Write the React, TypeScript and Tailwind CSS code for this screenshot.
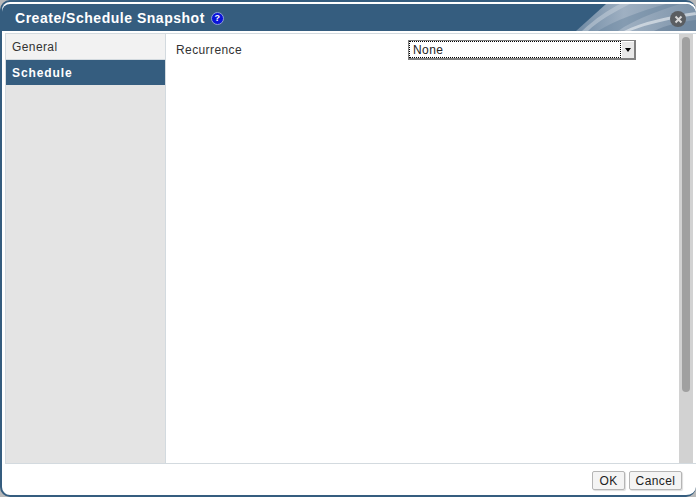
import React from "react";

// Swoosh artwork in the title bar
const HeaderSwoosh = () => (
  <svg className="absolute right-0 top-0 h-full w-[120px]" viewBox="0 0 120 27" preserveAspectRatio="none">
    <defs>
      <linearGradient id="sw" x1="0" y1="0" x2="1" y2="0">
        <stop offset="0" stopColor="#6f8aa4" />
        <stop offset="0.4" stopColor="#9fb0c2" />
        <stop offset="1" stopColor="#7d93a9" />
      </linearGradient>
    </defs>
    <path d="M0 27 L30 0 L120 0 L120 27 Z" fill="url(#sw)" />
    <path d="M6 27 C20 14 32 6 44 0 L54 0 C38 8 22 17 12 27 Z" fill="#c3ced9" opacity="0.55" />
    <path d="M22 27 C40 16 62 8 90 0 L104 0 C78 8 56 17 42 27 Z" fill="#5f7d98" opacity="0.4" />
    <path d="M48 27 C66 18 92 12 120 8 L120 11 C94 15 72 20 54 27 Z" fill="#dfe5eb" opacity="0.7" />
    <path d="M78 27 C90 21 104 18 120 16 L120 27 Z" fill="#5f7a94" opacity="0.5" />
  </svg>
);

const HelpIcon = () => (
  <span className="flex h-[13px] w-[13px] items-center justify-center rounded-full border border-[#8f9fd8] bg-[#0a14d8] text-[9px] font-bold leading-none text-white">
    ?
  </span>
);

const CloseIcon = () => (
  <span className="absolute right-[10px] top-[7px] flex h-[16px] w-[16px] items-center justify-center rounded-full bg-[#5a5d61]">
    <svg width="9" height="9" viewBox="0 0 9 9">
      <path d="M1.5 1.5 L7.5 7.5 M7.5 1.5 L1.5 7.5" stroke="#d8d8d8" strokeWidth="2" />
    </svg>
  </span>
);

const App: React.FC = () => {
  return (
    <div
      className="h-[497px] w-[696px] overflow-hidden bg-[#b9b9b9] text-[12px] tracking-[0.4px]"
      style={{ fontFamily: '"Liberation Sans", Arial, sans-serif' }}
    >
      <div className="flex h-full w-full flex-col overflow-hidden rounded-[10px] border-x-2 border-y-2 border-[#355d7f] border-r-0 bg-white pt-[2px]">
        {/* Title bar */}
        <div className="relative flex h-[27px] shrink-0 items-center gap-[6px] overflow-hidden rounded-tl-[8px] rounded-tr-[10px] bg-[#355d7f] pl-[13px] pt-[1px]">
          <HeaderSwoosh />
          <span className="text-[14px] font-bold tracking-[0.52px] text-white">Create/Schedule Snapshot</span>
          <HelpIcon />
          <CloseIcon />
        </div>

        {/* Body */}
        <div className="ml-[3px] mt-[2px] flex h-[431px] shrink-0 border-y border-[#d3dadf]">
          <div className="flex w-[161px] shrink-0 flex-col border-x border-[#d3dadf] bg-[#e4e4e4]">
            <div className="flex h-[26px] items-center border-b border-[#d3dadf] bg-[#f2f2f2] pl-[6px] text-[#333]">General</div>
            <div className="flex h-[25px] items-center bg-[#355d7f] pl-[6px] font-bold tracking-[0.9px] text-white">Schedule</div>
          </div>
          <div className="flex min-w-0 flex-1 bg-white">
            <div className="flex flex-1 items-start pl-[10px] pt-[7px]">
              <span className="w-[232px] text-[#333]">Recurrence</span>
              <div className="-mt-[1px] flex h-[20px] w-[228px] border border-b-2 border-r-2 border-[#808080] bg-white">
                <div className="flex flex-1 items-center border border-dotted border-black pl-[3px] text-[#222]">None</div>
                <div className="flex w-[13px] items-center justify-center border-l border-t border-white bg-[#e8e8e8]">
                  <span className="h-0 w-0 border-x-[3.5px] border-t-[4px] border-x-transparent border-t-black" />
                </div>
              </div>
            </div>
            {/* Scrollbar */}
            <div className="mr-[3px] w-[14px] shrink-0 bg-[#d2d2d2] px-[3px] pt-[3px]">
              <div className="h-[355px] w-[8px] rounded-[4px] bg-[#a0a0a0]" />
            </div>
          </div>
        </div>

        {/* Footer */}
        <div className="flex flex-1 items-start justify-end gap-[4px] pr-[14px] pt-[7px]">
          <button className="h-[19px] w-[33px] rounded-[2px] border border-[#b5b5b5] bg-[#f4f4f4] text-[#222] shadow-[1px_1px_1px_#ddd]">OK</button>
          <button className="h-[19px] w-[53px] rounded-[2px] border border-[#b5b5b5] bg-[#f4f4f4] text-[#222] shadow-[1px_1px_1px_#ddd]">Cancel</button>
        </div>
      </div>
    </div>
  );
};

export default App;
